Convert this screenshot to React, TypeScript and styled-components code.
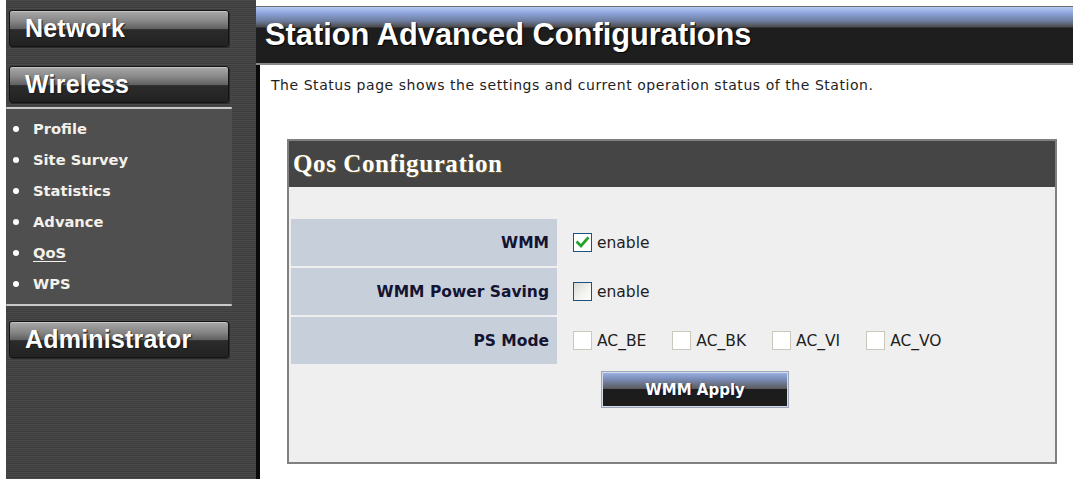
import styled, { createGlobalStyle } from "styled-components";

const GlobalStyle = createGlobalStyle`
  html, body {
    margin: 0;
    padding: 0;
    background: #ffffff;
  }
`;

const Page = styled.div`
  width: 1073px;
  height: 479px;
  padding-left: 6px;
  box-sizing: border-box;
  display: flex;
  overflow: hidden;
  background: #ffffff;
`;

const striped = `
  repeating-linear-gradient(
    to bottom,
    #4a4a4a 0px,
    #4a4a4a 1px,
    #3d3d3d 1px,
    #3d3d3d 2px
  )
`;

const Sidebar = styled.nav`
  width: 250px;
  flex: none;
  background: ${striped};
  padding-top: 10px;
  box-sizing: border-box;
  display: flex;
  flex-direction: column;
`;

const NavButton = styled.div<{ $gap?: number }>`
  width: 220px;
  height: 37px;
  margin-left: 3px;
  margin-top: ${(p) => p.$gap ?? 0}px;
  box-sizing: border-box;
  border: 1px solid #141414;
  border-radius: 3px;
  box-shadow: 1px 1px 0 #2a2a2a, inset 0 1px 0 #c4c4c4;
  background: linear-gradient(
    to bottom,
    #a9a9a9 0%,
    #858585 30%,
    #5e5e5e 52%,
    #2b2b2b 53%,
    #222222 100%
  );
  display: flex;
  align-items: center;
  padding-left: 15px;
  color: #ffffff;
  font-family: "Liberation Sans", Arial, sans-serif;
  font-size: 25px;
  font-weight: 700;
  letter-spacing: 0.2px;
  text-shadow: 1px 1px 1px #1a1a1a;
`;

const Rule = styled.div<{ $top: number }>`
  width: 226px;
  height: 2px;
  margin-top: ${(p) => p.$top}px;
  background: #c9c9c9;
  border-radius: 1px;
`;

const Menu = styled.ul`
  width: 226px;
  margin: 0;
  padding: 4px 0 5px 7px;
  box-sizing: border-box;
  list-style: none;
  background: #4f4f4f;
`;

const MenuItem = styled.li<{ $active?: boolean }>`
  height: 31px;
  display: flex;
  align-items: center;
  gap: 14px;
  color: #f4f1ea;
  font-family: "DejaVu Sans", Verdana, sans-serif;
  font-size: 14.7px;
  font-weight: 700;
  text-decoration: ${(p) => (p.$active ? "underline" : "none")};
  text-underline-offset: 3px;

  &::before {
    content: "";
    width: 6px;
    height: 6px;
    border-radius: 50%;
    background: #ffffff;
    flex: none;
  }
`;

const Main = styled.main`
  flex: 1;
  padding-top: 6px;
  display: flex;
  flex-direction: column;
  background: #ffffff;
`;

const TitleBar = styled.header`
  height: 59px;
  box-sizing: border-box;
  border-top: 1px solid #6e6e6e;
  border-bottom: 2px solid #8a8a8a;
  background: linear-gradient(
    to bottom,
    #b2c9f2 0px,
    #8ea6dc 6px,
    #6d7c9e 14px,
    #4b4b4b 20px,
    #1e1e1e 21px,
    #1e1e1e 100%
  );
  display: flex;
  align-items: center;
  padding-left: 9px;
  color: #ffffff;
  font-family: "Liberation Sans", Arial, sans-serif;
  font-size: 30.8px;
  font-weight: 700;
  text-shadow: 1px 1px 1px #000000;
`;

const Content = styled.section`
  flex: 1;
  border-left: 4px solid #0a0a0a;
  padding: 11px 16px 0 11px;
`;

const Intro = styled.p`
  margin: 0;
  color: #1e1e1e;
  font-family: "DejaVu Sans", Tahoma, sans-serif;
  font-size: 14px;
  letter-spacing: 0.55px;
  line-height: 18px;
`;

const Panel = styled.div`
  margin: 45px 0 0 16px;
  height: 325px;
  box-sizing: border-box;
  border: 2px solid #808080;
  background: #efefef;
  display: flex;
  flex-direction: column;
`;

const PanelHead = styled.div`
  height: 46px;
  background: #454545;
  display: flex;
  align-items: center;
  padding-left: 4px;
  color: #ffffff;
  font-family: "Liberation Serif", "Times New Roman", serif;
  font-size: 25px;
  font-weight: 700;
  letter-spacing: 0.6px;
  text-shadow: 1px 1px 0 #6b5a2a;
`;

const PanelBody = styled.div`
  padding: 32px 0 0 2px;
`;

const Grid = styled.div`
  display: grid;
  grid-template-columns: 266px 1fr;
  row-gap: 2px;
`;

const Label = styled.div`
  height: 47px;
  background: #c7cfdb;
  display: flex;
  align-items: center;
  justify-content: flex-end;
  padding-right: 8px;
  box-sizing: border-box;
  color: #141432;
  font-family: "DejaVu Sans", Tahoma, sans-serif;
  font-size: 15.5px;
  font-weight: 700;
`;

const Value = styled.div`
  display: flex;
  align-items: center;
  padding-left: 16px;
  gap: 26px;
`;

const Option = styled.label`
  display: flex;
  align-items: center;
  gap: 5px;
  color: #1e1e1e;
  font-family: "DejaVu Sans", Tahoma, sans-serif;
  font-size: 15.5px;
`;

const Box = styled.span<{ $state: "on" | "off" | "disabled" }>`
  width: 19px;
  height: 19px;
  box-sizing: border-box;
  display: inline-flex;
  align-items: center;
  justify-content: center;
  border: 1px solid
    ${(p) => (p.$state === "disabled" ? "#cac8bb" : "#1c5180")};
  background: ${(p) =>
    p.$state === "off"
      ? "linear-gradient(135deg, #d8d8d2 0%, #f2f2ef 55%, #ffffff 100%)"
      : "#ffffff"};
`;

const ApplyRow = styled.div`
  padding: 7px 0 0 310px;
`;

const ApplyButton = styled.button`
  width: 188px;
  height: 37px;
  border: 1px solid #9aa6b8;
  box-shadow: inset 0 0 0 1px #d7dde8;
  background: linear-gradient(
    to bottom,
    #9fb6ea 0%,
    #7b8db8 20%,
    #5a5a5a 48%,
    #1c1c1c 50%,
    #1c1c1c 100%
  );
  color: #ffffff;
  font-family: "DejaVu Sans", Tahoma, sans-serif;
  font-size: 15px;
  font-weight: 700;
  text-shadow: 1px 1px 1px #0c1a3a;
  cursor: pointer;
  padding: 0;
`;

const Check = () => (
  <svg width="15" height="15" viewBox="0 0 15 15">
    <path
      d="M2.5 7.5 L6 11 L12.5 3.5"
      fill="none"
      stroke="#21a32a"
      strokeWidth="2.8"
      strokeLinecap="square"
    />
  </svg>
);

const menu = ["Profile", "Site Survey", "Statistics", "Advance", "QoS", "WPS"];
const psModes = ["AC_BE", "AC_BK", "AC_VI", "AC_VO"];

export default function App() {
  return (
    <>
      <GlobalStyle />
      <Page>
        <Sidebar>
          <NavButton>Network</NavButton>
          <NavButton $gap={19}>Wireless</NavButton>
          <Rule $top={4} />
          <Menu>
            {menu.map((m) => (
              <MenuItem key={m} $active={m === "QoS"}>
                {m}
              </MenuItem>
            ))}
          </Menu>
          <Rule $top={0} />
          <NavButton $gap={15}>Administrator</NavButton>
        </Sidebar>
        <Main>
          <TitleBar>Station Advanced Configurations</TitleBar>
          <Content>
            <Intro>
              The Status page shows the settings and current operation status of the Station.
            </Intro>
            <Panel>
              <PanelHead>Qos Configuration</PanelHead>
              <PanelBody>
                <Grid>
                  <Label>WMM</Label>
                  <Value>
                    <Option>
                      <Box $state="on">
                        <Check />
                      </Box>
                      enable
                    </Option>
                  </Value>
                  <Label>WMM Power Saving</Label>
                  <Value>
                    <Option>
                      <Box $state="off" />
                      enable
                    </Option>
                  </Value>
                  <Label>PS Mode</Label>
                  <Value>
                    {psModes.map((m) => (
                      <Option key={m}>
                        <Box $state="disabled" />
                        {m}
                      </Option>
                    ))}
                  </Value>
                </Grid>
                <ApplyRow>
                  <ApplyButton>WMM Apply</ApplyButton>
                </ApplyRow>
              </PanelBody>
            </Panel>
          </Content>
        </Main>
      </Page>
    </>
  );
}
